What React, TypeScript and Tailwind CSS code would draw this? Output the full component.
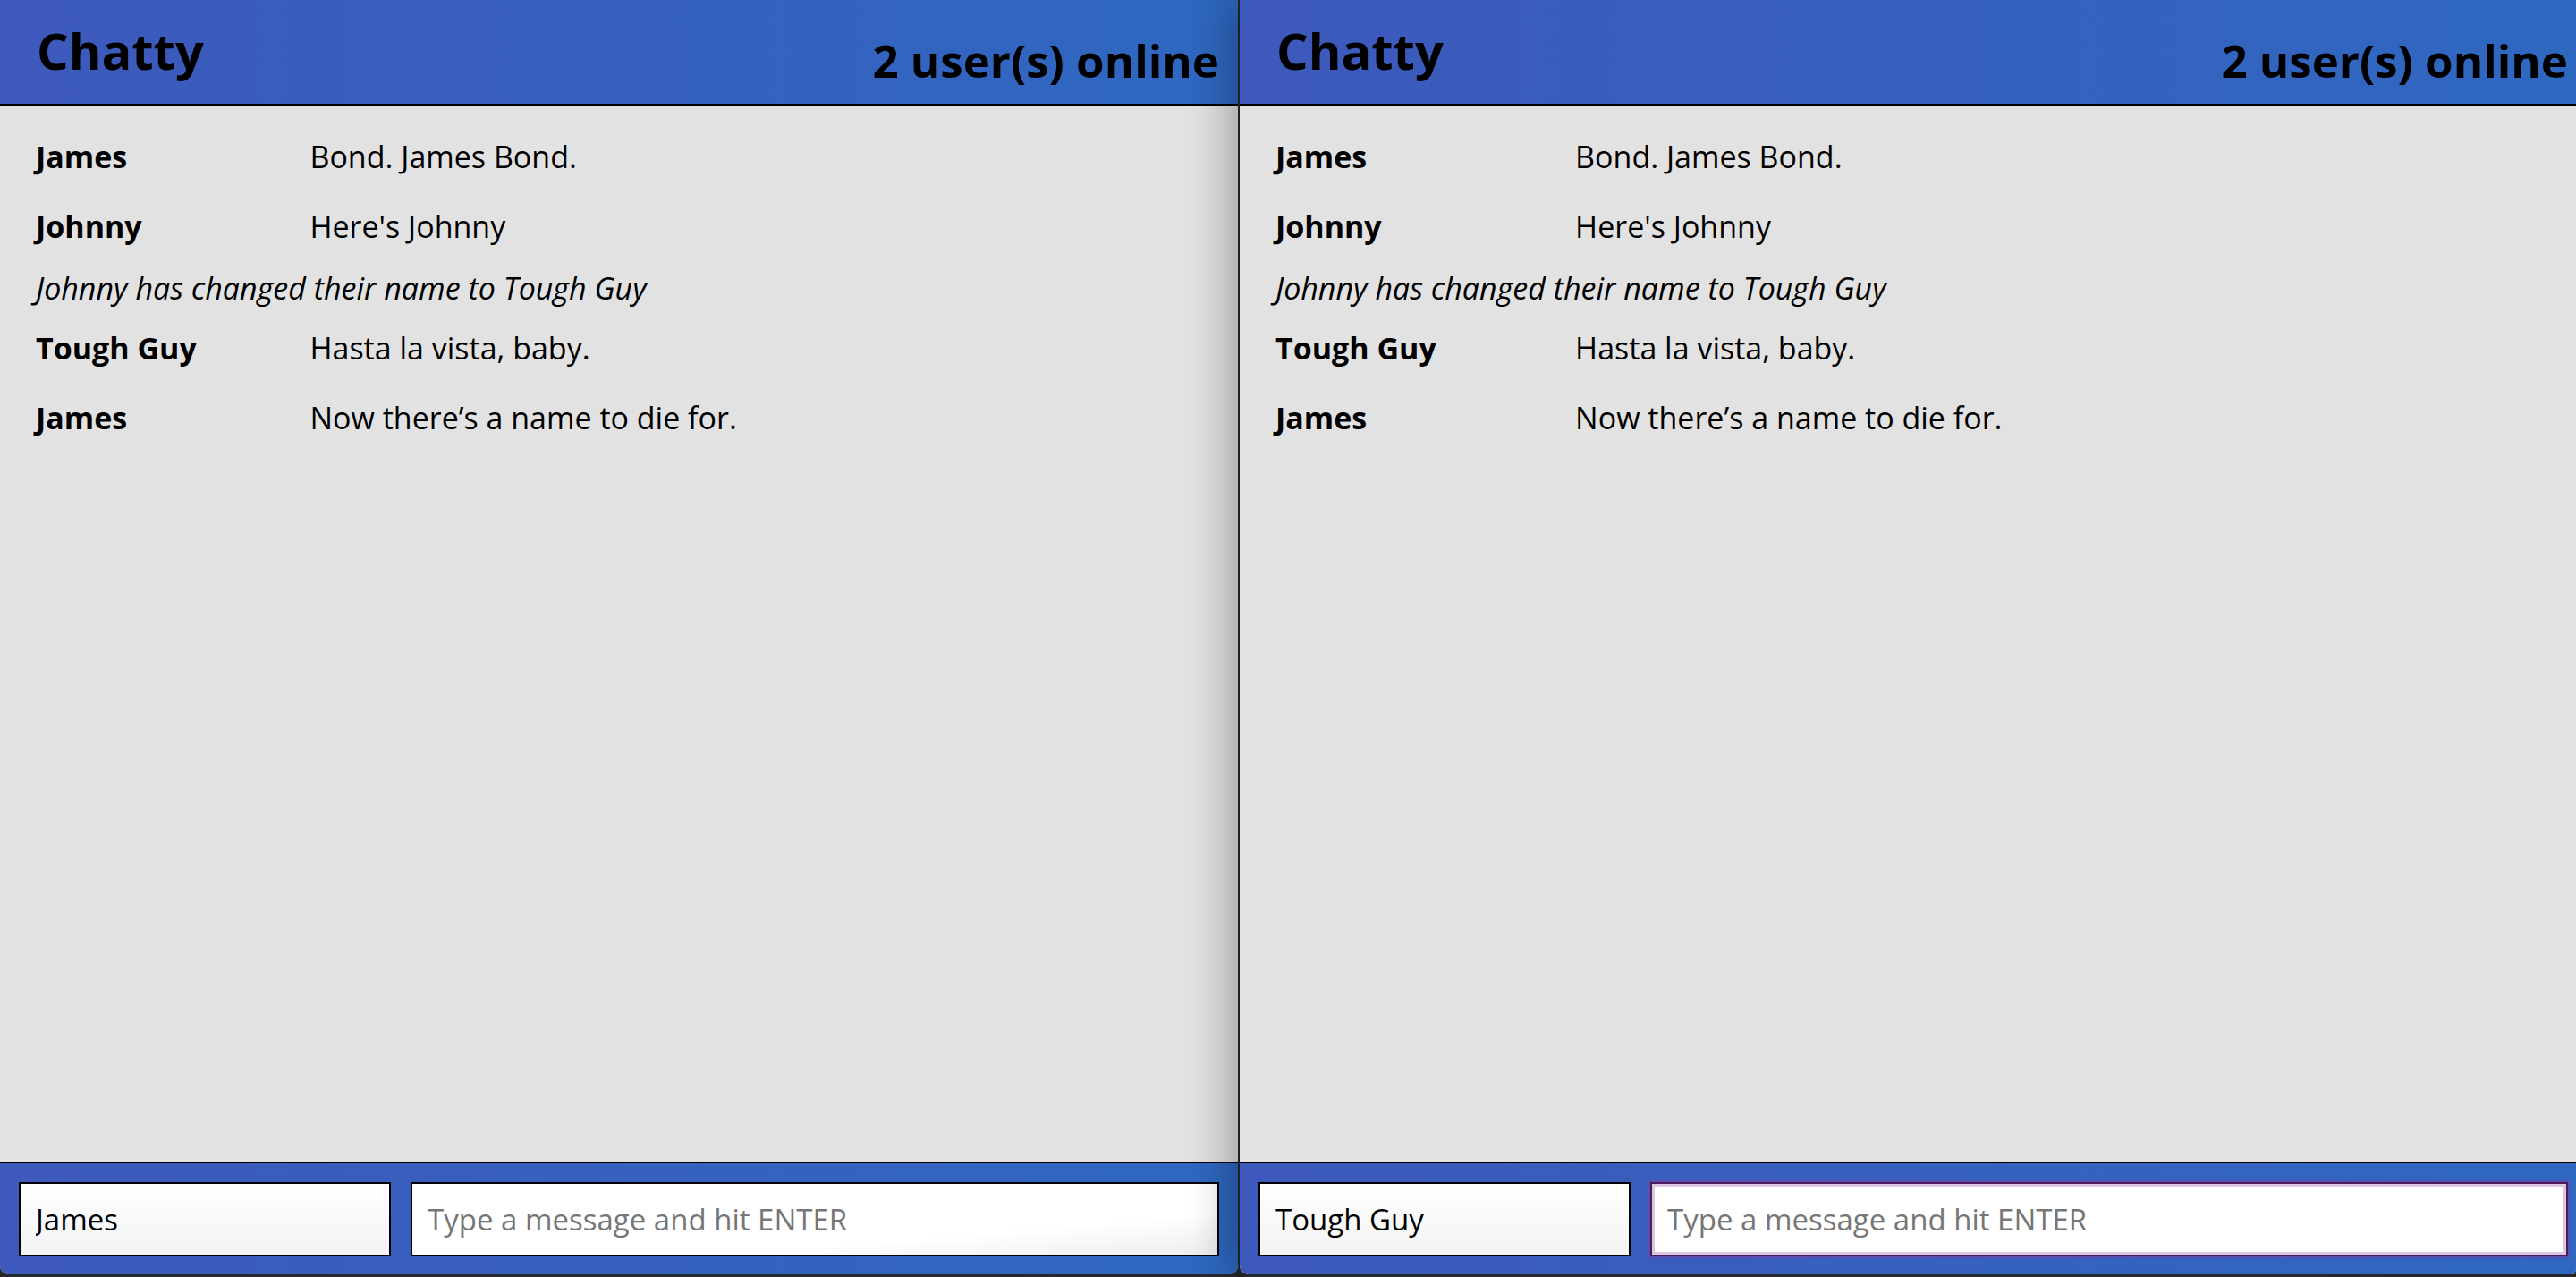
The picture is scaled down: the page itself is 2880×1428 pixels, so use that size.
import React from "react";

type Entry =
  | { kind: "message"; name: string; text: string }
  | { kind: "notice"; text: string };

const entries: Entry[] = [
  { kind: "message", name: "James", text: "Bond. James Bond." },
  { kind: "message", name: "Johnny", text: "Here's Johnny" },
  { kind: "notice", text: "Johnny has changed their name to Tough Guy" },
  { kind: "message", name: "Tough Guy", text: "Hasta la vista, baby." },
  { kind: "message", name: "James", text: "Now there\u2019s a name to die for." },
];

const ChatWindow: React.FC<{ user: string; focused?: boolean; className: string }> = ({
  user,
  focused,
  className,
}) => {
  return (
    <div
      className={`flex h-[1425px] shrink-0 flex-col overflow-hidden rounded-b-[10px] bg-[#e2e2e2] ${className}`}
    >
      {/* header */}
      <header className="flex h-[118px] shrink-0 items-center justify-between border-b-2 border-black bg-linear-to-r from-[#3d59bb] to-[#2e68c1] pl-[41px] pr-[21px]">
        <h1 className="mb-[4px] text-[56px] leading-none font-bold">Chatty</h1>
        <span className="mt-[18px] text-[51px] leading-none font-bold">2 user(s) online</span>
      </header>

      {/* messages */}
      <main className="flex-1 px-[40px] pt-[18px] text-[34px] leading-[40px]">
        {entries.map((entry, i) =>
          entry.kind === "message" ? (
            <div key={i} className="flex py-[19px]">
              <span className="w-[23.5%] shrink-0 font-bold">{entry.name}</span>
              <span>{entry.text}</span>
            </div>
          ) : (
            <div key={i} className="pt-[10px] pb-[8px] italic">
              {entry.text}
            </div>
          )
        )}
      </main>

      {/* compose bar */}
      <footer className="flex h-[126px] shrink-0 gap-[22px] border-t-2 border-black bg-linear-to-r from-[#3d59bb] to-[#2e68c1] px-[21px] pt-[21px] pb-[20px]">
        <input
          readOnly
          value={user}
          className="h-[83px] w-[416px] shrink-0 border-2 border-black bg-linear-to-b from-white to-[#f3f3f3] pl-[17px] text-[33px] text-black outline-none"
        />
        <input
          readOnly
          placeholder="Type a message and hit ENTER"
          className={
            focused
              ? "h-[83px] flex-1 border-2 border-[#4a1c5c] bg-white pl-[17px] text-[33px] shadow-[inset_0_0_0_3px_#dcc6e1,0_0_3px_1px_#7a3f9e] outline-none placeholder:text-[#767676]"
              : "h-[83px] flex-1 border-2 border-black bg-linear-to-br from-white from-70% to-[#eeeeee] pl-[17px] text-[33px] outline-none placeholder:text-[#767676]"
          }
        />
      </footer>
    </div>
  );
};

export default function App() {
  return (
    <div className="flex h-[1428px] w-[2880px] gap-[2px] overflow-hidden bg-[#25282e] font-['Open_Sans',sans-serif] text-black">
      <ChatWindow user="James" className="w-[1384px]" />
      <div className="relative z-10 flex-1 overflow-hidden rounded-b-[10px] shadow-[-14px_0_45px_rgba(0,0,0,0.28)]">
        <ChatWindow user="Tough Guy" focused className="w-[1506px]" />
      </div>
    </div>
  );
}
